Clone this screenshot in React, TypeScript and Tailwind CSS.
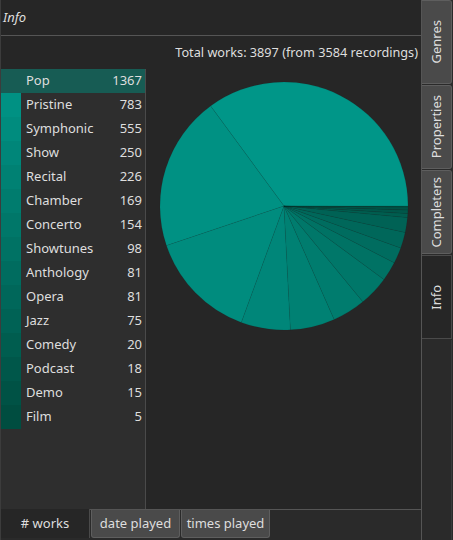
const genres: [string, number][] = [
  ['Pop', 1367],
  ['Pristine', 783],
  ['Symphonic', 555],
  ['Show', 250],
  ['Recital', 226],
  ['Chamber', 169],
  ['Concerto', 154],
  ['Showtunes', 98],
  ['Anthology', 81],
  ['Opera', 81],
  ['Jazz', 75],
  ['Comedy', 20],
  ['Podcast', 18],
  ['Demo', 15],
  ['Film', 5],
];

const total = genres.reduce((s, g) => s + g[1], 0);

// teal 500 -> teal 900
const shade = (i: number) => {
  const t = i / (genres.length - 1);
  const g = Math.round(150 - t * 73);
  const b = Math.round(136 - t * 72);
  return `rgb(0, ${g}, ${b})`;
};

function Pie() {
  const cx = 125;
  const cy = 125;
  const r = 124;
  let acc = 0;
  const slices = genres.map(([name, n], i) => {
    const a0 = (acc / total) * Math.PI * 2;
    acc += n;
    const a1 = (acc / total) * Math.PI * 2;
    const x0 = cx + r * Math.cos(a0);
    const y0 = cy - r * Math.sin(a0);
    const x1 = cx + r * Math.cos(a1);
    const y1 = cy - r * Math.sin(a1);
    const large = a1 - a0 > Math.PI ? 1 : 0;
    const d = `M${cx},${cy} L${x0},${y0} A${r},${r} 0 ${large} 0 ${x1},${y1} Z`;
    return <path key={name} d={d} fill={shade(i)} stroke="rgba(0,0,0,0.1)" strokeWidth={0.5} />;
  });
  return (
    <svg width={250} height={250} viewBox="0 0 250 250">
      {slices}
    </svg>
  );
}

const sideTabs = ['Genres', 'Properties', 'Completers', 'Info'];
const bottomTabs = ['# works', 'date played', 'times played'];

export default function App() {
  return (
    <div
      className="w-[453px] h-[540px] flex bg-[#2a2a2a] text-[#dedede] overflow-hidden"
      style={{ fontFamily: '"Noto Sans", "Open Sans", sans-serif' }}
    >
      {/* main panel */}
      <div className="w-[421px] flex flex-col border-l border-[#3c3c3c]">
        <div className="h-[36px] shrink-0 flex items-center px-[2px] bg-[#262626] border-b border-[#555] text-[13px] italic">
          Info
        </div>
        <div className="h-[474px] shrink-0 flex flex-col bg-[#262626] border-b border-[#555]">
          <div className="h-[33px] shrink-0 flex items-center justify-end pr-[3px] text-[12.7px]">
            Total works: {total} (from 3584 recordings)
          </div>
          <div className="flex-1 flex">
            <div className="w-[145px] bg-[#2e2e2e] border-r border-[#4a4a4a] text-[13px]">
              {genres.map(([name, n], i) => (
                <div
                  key={name}
                  className={`h-[24px] flex items-center ${i === 0 ? 'bg-[#175c54]' : ''}`}
                >
                  <div
                    className="w-[20px] h-full"
                    style={{ backgroundColor: i === 0 ? 'transparent' : shade(i) }}
                  />
                  <span className="pl-[5px] flex-1">{name}</span>
                  <span className="pr-[3px]">{n}</span>
                </div>
              ))}
            </div>
            <div className="flex-1 flex justify-center pt-[12px]">
              <div className="h-[250px]">
                <Pie />
              </div>
            </div>
          </div>
        </div>
        <div className="flex h-[28px] text-[13px]">
          {bottomTabs.map((t, i) => (
            <div
              key={t}
              className={`w-[89px] flex items-center justify-center ${
                i === 0
                  ? 'bg-[#262626] border-r border-[#4a4a4a] -mt-px h-[29px]'
                  : 'h-[28px] bg-[#4a4a4a] border border-t-0 border-[#5e5e5e] rounded-b-[3px] ml-px'
              }`}
            >
              {t}
            </div>
          ))}
        </div>
      </div>

      {/* side tabs */}
      <div className="flex-1 flex flex-col border-l border-[#555] pr-px">
        {sideTabs.map((t) => (
          <div
            key={t}
            className={`h-[84px] mb-px flex items-center justify-center text-[13px] ${
              t === 'Info'
                ? 'bg-[#262626] border border-l-0 border-[#4a4a4a]'
                : 'bg-[#4a4a4a] border border-l-0 border-[#5e5e5e] rounded-r-[3px]'
            }`}
          >
            <span className="[writing-mode:vertical-rl] rotate-180">{t}</span>
          </div>
        ))}
        <div className="flex-1 border-r border-[#3a3a3a]" />
      </div>
    </div>
  );
}
